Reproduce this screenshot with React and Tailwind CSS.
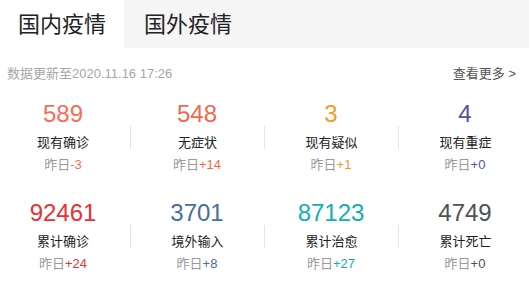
import React from 'react';

const stats = [
    [
        { num: '589', label: '现有确诊', diff: '-3', color: 'text-[#ff6a57]' },
        { num: '548', label: '无症状', diff: '+14', color: 'text-[#f2694a]' },
        { num: '3', label: '现有疑似', diff: '+1', color: 'text-[#f39a1f]' },
        { num: '4', label: '现有重症', diff: '+0', color: 'text-[#545499]' },
    ],
    [
        { num: '92461', label: '累计确诊', diff: '+24', color: 'text-[#e83132]' },
        { num: '3701', label: '境外输入', diff: '+8', color: 'text-[#476da0]' },
        { num: '87123', label: '累计治愈', diff: '+27', color: 'text-[#10aeb5]' },
        { num: '4749', label: '累计死亡', diff: '+0', color: 'text-[#4e5256]' },
    ],
];

const StatCell = ({ item, first }) => (
    <div className="flex flex-col items-center">
        <div className={`text-[24px] leading-[25px] ${item.color}`}>{item.num}</div>
        <div
            className={`w-full h-[23px] pt-[10px] text-center text-[13px] leading-[13px] text-[#222] ${first ? '' : 'border-l border-[#e5e5e5]'}`}
        >
            {item.label}
        </div>
        <div className="mt-[8px] text-[13px] leading-[16px] text-[#999]">
            昨日<span className={item.color}>{item.diff}</span>
        </div>
    </div>
);

export default function App() {
    return (
        <div
            className="w-[529px] h-[281px] bg-white overflow-hidden"
            style={{ fontFamily: '"Liberation Sans", "Noto Sans CJK SC", sans-serif' }}
        >
            {/* Tabs */}
            <div className="flex h-[48px] bg-[#f5f5f5]">
                <div className="w-[124px] bg-white flex items-center justify-center text-[22px] text-[#222]">
                    国内疫情
                </div>
                <div className="pl-[20px] flex items-center text-[22px] text-[#222]">
                    国外疫情
                </div>
            </div>

            {/* Update info */}
            <div className="h-[52px] flex items-center justify-between pl-[7px] pr-[13px] text-[13px]">
                <span className="text-[#a6a6a6]">数据更新至2020.11.16 17:26</span>
                <span className="text-[#555]">查看更多 &gt;</span>
            </div>

            {/* Stats */}
            <div className="w-[536px] -ml-[4px] pt-[1px]">
                {stats.map((row, r) => (
                    <div key={r} className={`grid grid-cols-4 ${r > 0 ? 'mt-[27px]' : ''}`}>
                        {row.map((item, i) => (
                            <StatCell key={i} item={item} first={i === 0} />
                        ))}
                    </div>
                ))}
            </div>
        </div>
    );
}
